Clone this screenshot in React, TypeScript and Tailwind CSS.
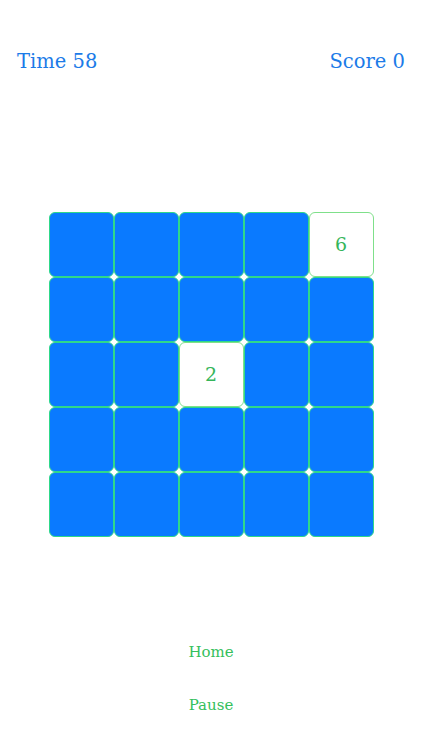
import React from "react";

const cells: (number | null)[] = [
  null, null, null, null, 6,
  null, null, null, null, null,
  null, null, 2, null, null,
  null, null, null, null, null,
  null, null, null, null, null,
];

export default function App() {
  return (
    <div
      className="flex h-[750px] w-[422px] flex-col bg-white"
      style={{ fontFamily: '"DejaVu Serif", "Liberation Serif", serif' }}
    >
      {/* Header */}
      <div className="mt-[50px] flex h-6 items-center justify-between px-[17px] text-[19.5px] leading-6 text-[#1c7be8]">
        <span>Time 58</span>
        <span>Score 0</span>
      </div>

      {/* Board */}
      <div className="mt-[138px] grid w-[325px] grid-cols-5 self-center">
        {cells.map((n, i) =>
          n === null ? (
            <div
              key={i}
              className="h-[65px] w-[65px] rounded-[6px] border border-[#2fd88a] bg-[#0a7aff]"
            />
          ) : (
            <div
              key={i}
              className="flex h-[65px] w-[65px] items-center justify-center rounded-[6px] border border-[#7fe08a] bg-white text-[19px] text-[#35b55a]"
            >
              {n}
            </div>
          )
        )}
      </div>

      {/* Buttons */}
      <div className="mt-[105px] flex flex-col items-center text-[15px] leading-5 text-[#35c05c]">
        <button className="h-5">Home</button>
        <button className="mt-[33px] h-5">Pause</button>
      </div>
    </div>
  );
}
